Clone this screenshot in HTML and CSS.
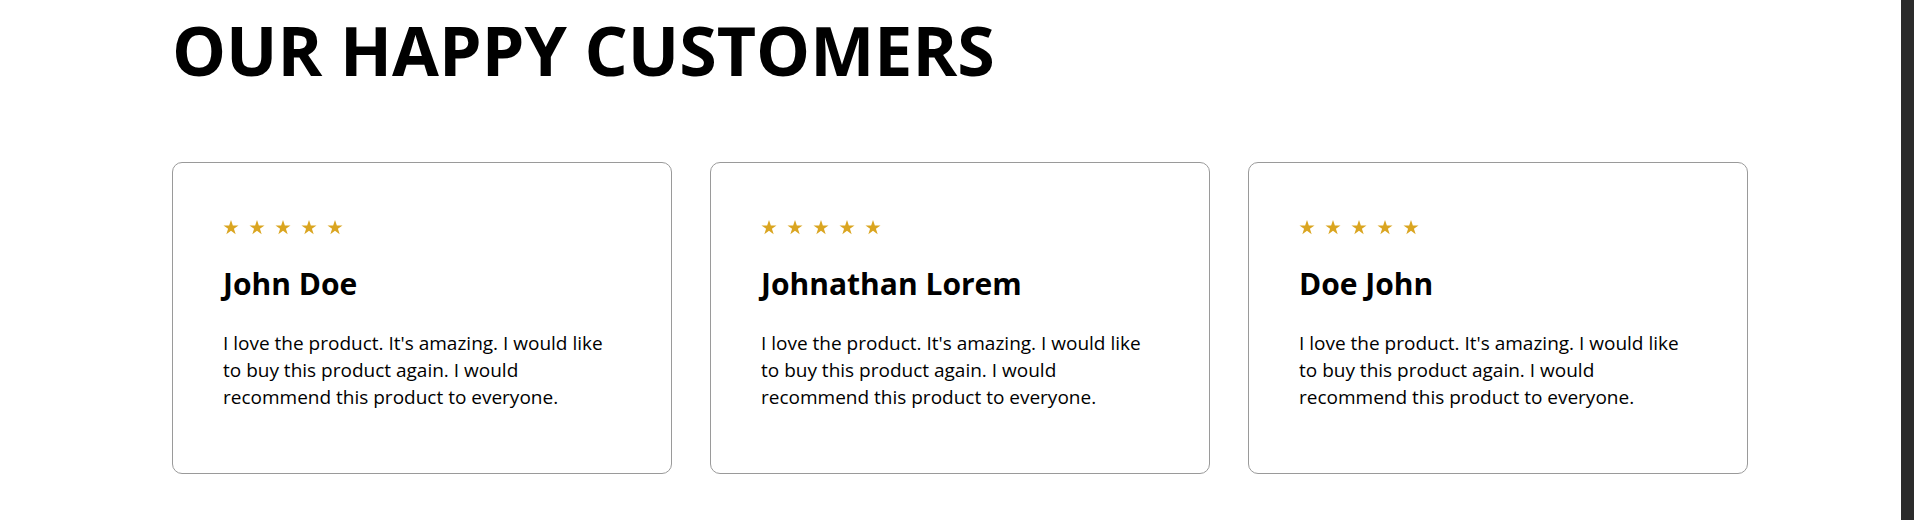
FILE: index.html
```html
<!DOCTYPE html>
<html lang="en">
<head>
<meta charset="utf-8">
<title>Our Happy Customers</title>
<link rel="stylesheet" href="styles.css">
</head>
<body>
<main class="page">
  <h1 class="title">OUR HAPPY CUSTOMERS</h1>
  <section class="reviews">
    <article class="card">
      <div class="stars">
        <svg class="star" viewBox="0 0 24 23"><path d="M12 0l2.83 8.25H23.5l-7.02 5.1 2.68 8.4L12 16.6l-7.16 5.15 2.68-8.4L.5 8.25h8.67z"/></svg>
        <svg class="star" viewBox="0 0 24 23"><path d="M12 0l2.83 8.25H23.5l-7.02 5.1 2.68 8.4L12 16.6l-7.16 5.15 2.68-8.4L.5 8.25h8.67z"/></svg>
        <svg class="star" viewBox="0 0 24 23"><path d="M12 0l2.83 8.25H23.5l-7.02 5.1 2.68 8.4L12 16.6l-7.16 5.15 2.68-8.4L.5 8.25h8.67z"/></svg>
        <svg class="star" viewBox="0 0 24 23"><path d="M12 0l2.83 8.25H23.5l-7.02 5.1 2.68 8.4L12 16.6l-7.16 5.15 2.68-8.4L.5 8.25h8.67z"/></svg>
        <svg class="star" viewBox="0 0 24 23"><path d="M12 0l2.83 8.25H23.5l-7.02 5.1 2.68 8.4L12 16.6l-7.16 5.15 2.68-8.4L.5 8.25h8.67z"/></svg>
      </div>
      <h2 class="name">John Doe</h2>
      <p class="text">I love the product. It's amazing. I would like to buy this product again. I would recommend this product to everyone.</p>
    </article>
    <article class="card">
      <div class="stars">
        <svg class="star" viewBox="0 0 24 23"><path d="M12 0l2.83 8.25H23.5l-7.02 5.1 2.68 8.4L12 16.6l-7.16 5.15 2.68-8.4L.5 8.25h8.67z"/></svg>
        <svg class="star" viewBox="0 0 24 23"><path d="M12 0l2.83 8.25H23.5l-7.02 5.1 2.68 8.4L12 16.6l-7.16 5.15 2.68-8.4L.5 8.25h8.67z"/></svg>
        <svg class="star" viewBox="0 0 24 23"><path d="M12 0l2.83 8.25H23.5l-7.02 5.1 2.68 8.4L12 16.6l-7.16 5.15 2.68-8.4L.5 8.25h8.67z"/></svg>
        <svg class="star" viewBox="0 0 24 23"><path d="M12 0l2.83 8.25H23.5l-7.02 5.1 2.68 8.4L12 16.6l-7.16 5.15 2.68-8.4L.5 8.25h8.67z"/></svg>
        <svg class="star" viewBox="0 0 24 23"><path d="M12 0l2.83 8.25H23.5l-7.02 5.1 2.68 8.4L12 16.6l-7.16 5.15 2.68-8.4L.5 8.25h8.67z"/></svg>
      </div>
      <h2 class="name">Johnathan Lorem</h2>
      <p class="text">I love the product. It's amazing. I would like to buy this product again. I would recommend this product to everyone.</p>
    </article>
    <article class="card">
      <div class="stars">
        <svg class="star" viewBox="0 0 24 23"><path d="M12 0l2.83 8.25H23.5l-7.02 5.1 2.68 8.4L12 16.6l-7.16 5.15 2.68-8.4L.5 8.25h8.67z"/></svg>
        <svg class="star" viewBox="0 0 24 23"><path d="M12 0l2.83 8.25H23.5l-7.02 5.1 2.68 8.4L12 16.6l-7.16 5.15 2.68-8.4L.5 8.25h8.67z"/></svg>
        <svg class="star" viewBox="0 0 24 23"><path d="M12 0l2.83 8.25H23.5l-7.02 5.1 2.68 8.4L12 16.6l-7.16 5.15 2.68-8.4L.5 8.25h8.67z"/></svg>
        <svg class="star" viewBox="0 0 24 23"><path d="M12 0l2.83 8.25H23.5l-7.02 5.1 2.68 8.4L12 16.6l-7.16 5.15 2.68-8.4L.5 8.25h8.67z"/></svg>
        <svg class="star" viewBox="0 0 24 23"><path d="M12 0l2.83 8.25H23.5l-7.02 5.1 2.68 8.4L12 16.6l-7.16 5.15 2.68-8.4L.5 8.25h8.67z"/></svg>
      </div>
      <h2 class="name">Doe John</h2>
      <p class="text">I love the product. It's amazing. I would like to buy this product again. I would recommend this product to everyone.</p>
    </article>
  </section>
</main>
<div class="scrollbar"></div>
</body>
</html>
```
FILE: styles.css
```css
html, body {
  margin: 0;
  padding: 0;
  height: 100%;
  overflow: hidden;
}
body {
  display: flex;
  background: #ffffff;
  font-family: "Open Sans", "Noto Sans", sans-serif;
  color: #000;
}
.page {
  flex: 1;
  padding: 0 0 0 172px;
}
.title {
  margin: 10px 0 0;
  font-size: 68px;
  line-height: 80px;
  font-weight: 700;
  letter-spacing: 0;
}
.reviews {
  display: flex;
  gap: 38px;
  margin-top: 72px;
}
.card {
  box-sizing: border-box;
  width: 500px;
  height: 312px;
  border: 1px solid #9a9a9a;
  border-radius: 10px;
  padding: 50px 50px 0;
}
.stars {
  display: flex;
  gap: 10px;
  margin-top: 7px;
  height: 15px;
}
.star {
  width: 16px;
  height: 15px;
  fill: #daa520;
}
.name {
  margin: 31px 0 0;
  font-size: 30px;
  line-height: 36px;
  font-weight: 700;
}
.text {
  margin: 28px 0 0;
  font-size: 19px;
  line-height: 27px;
  font-weight: 400;
}
.scrollbar {
  width: 13px;
  height: 100%;
  background: #2b2b2b;
  flex: none;
}
```
